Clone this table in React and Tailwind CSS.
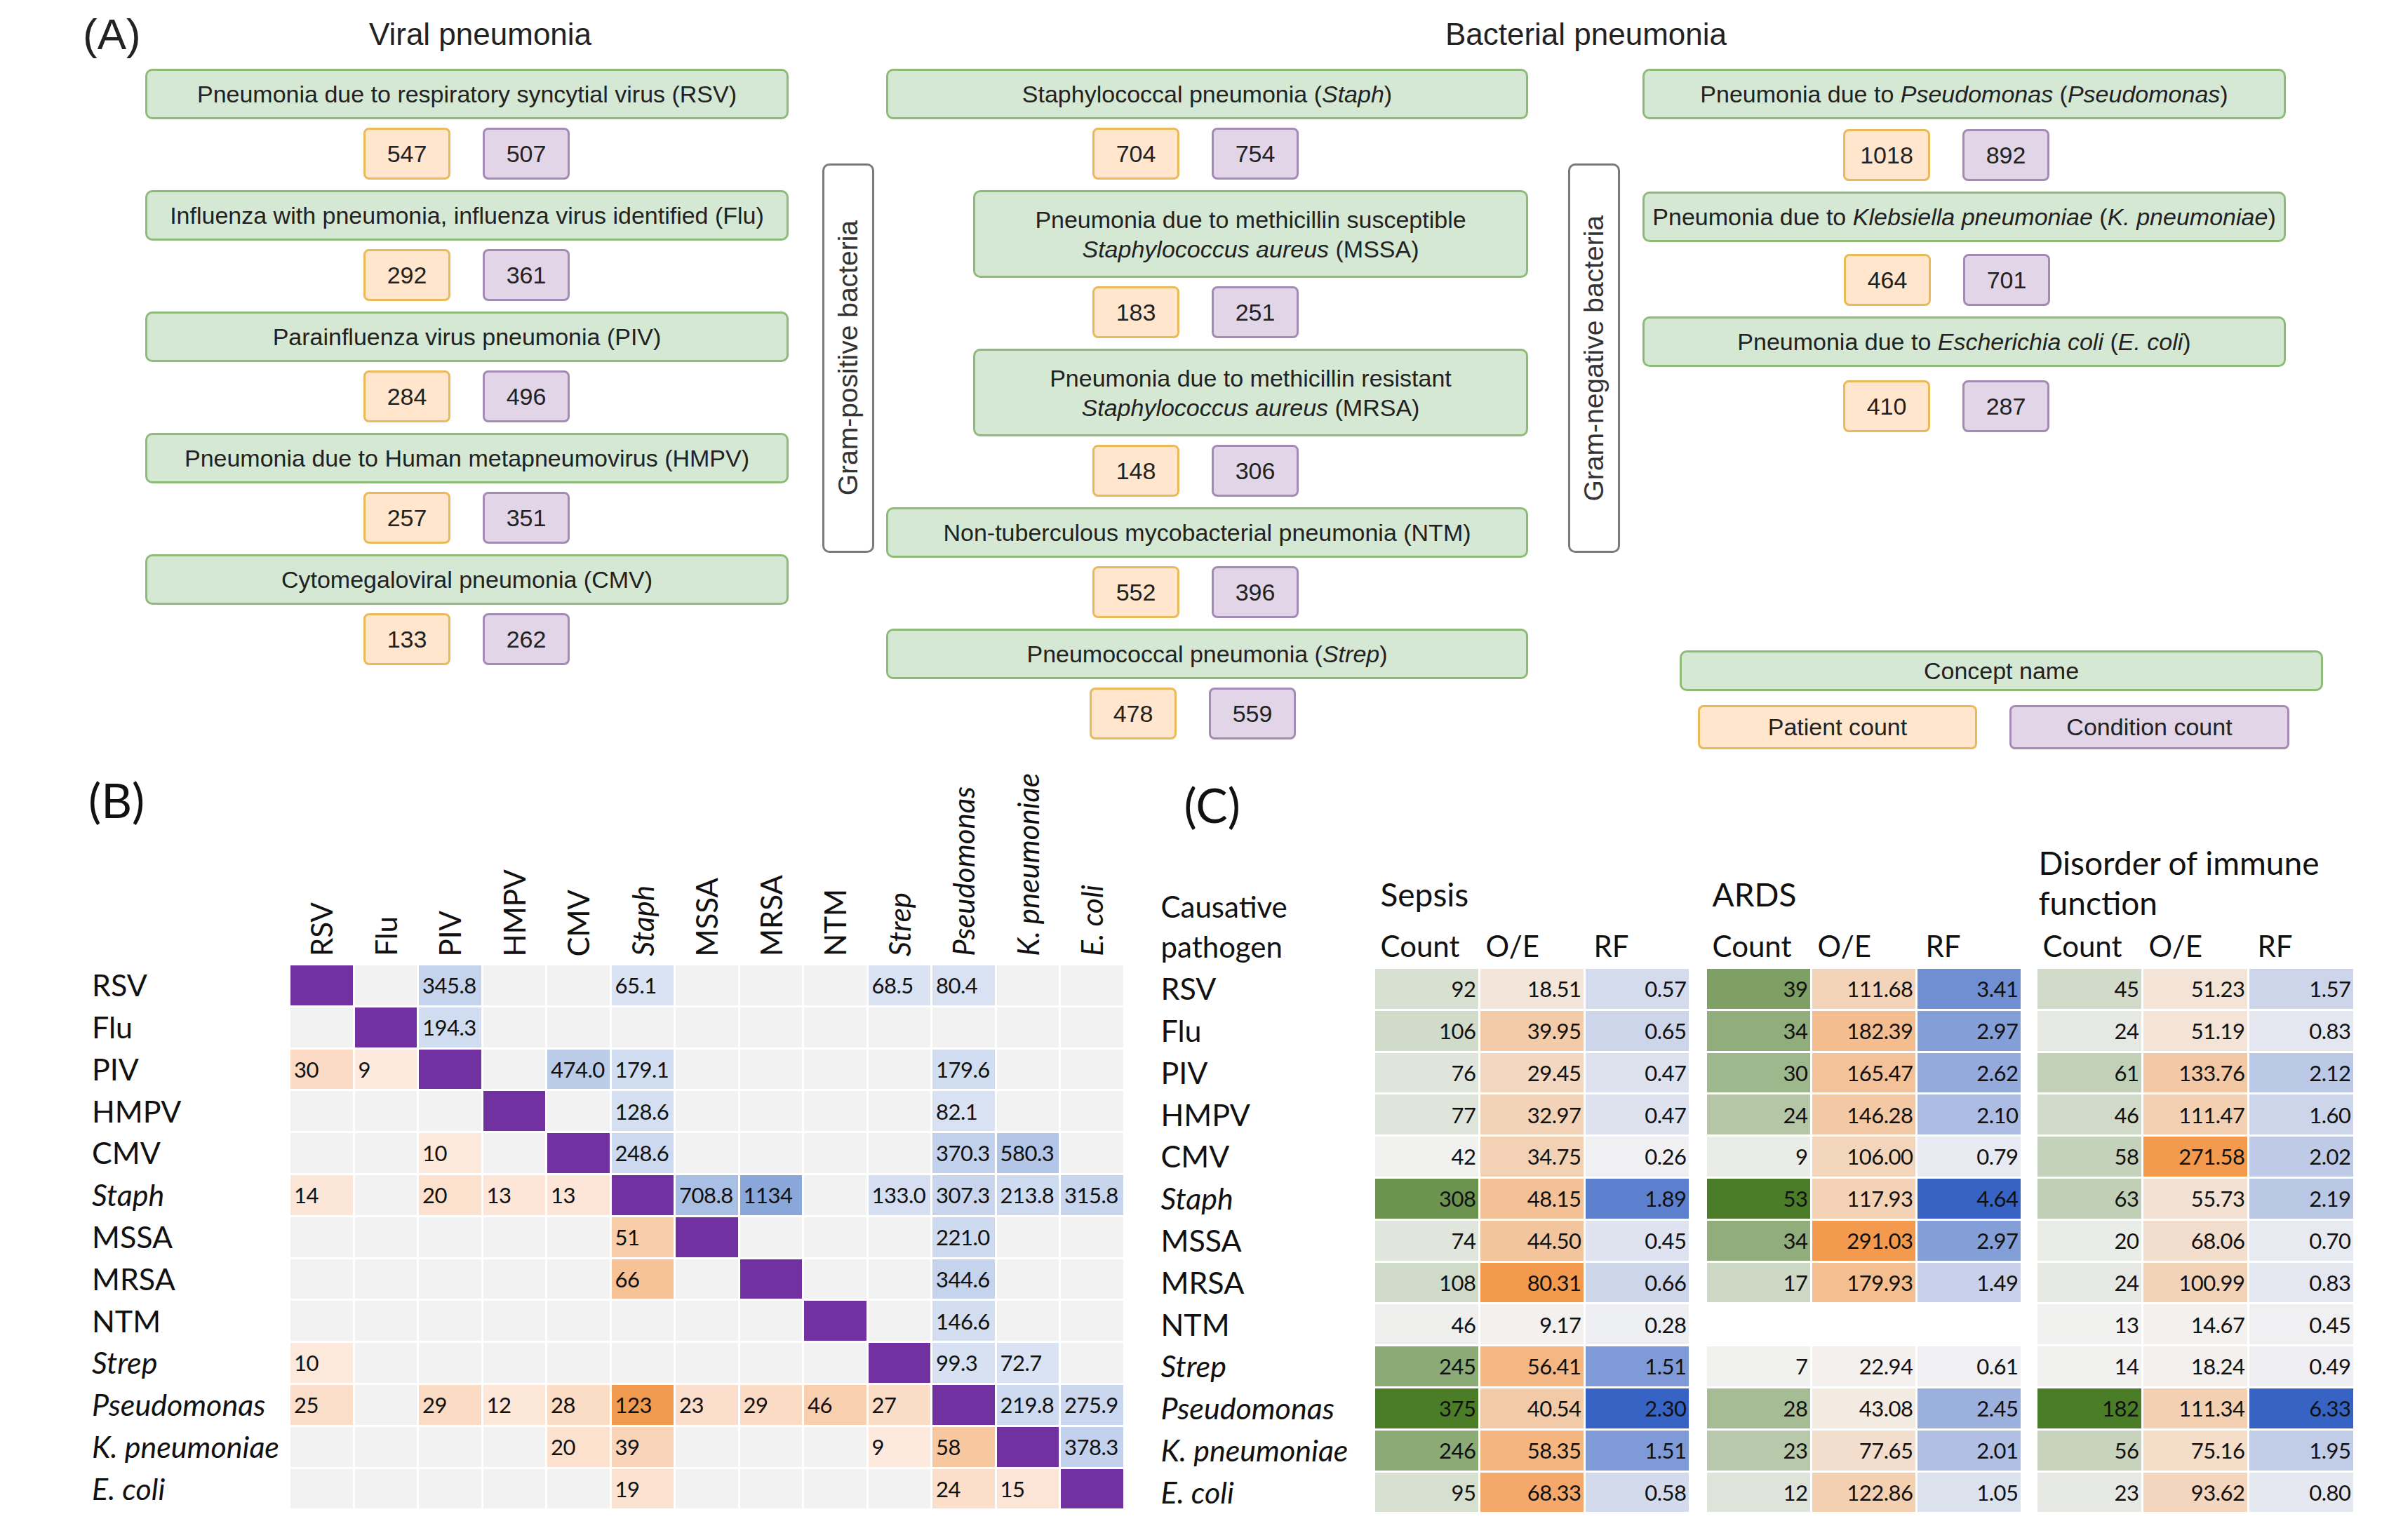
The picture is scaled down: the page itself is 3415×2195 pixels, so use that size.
import React from "react";

const SANS = "font-['Liberation_Sans',Arial,sans-serif]";
const CAL = "font-['Lato',sans-serif]";

function hex(h) {
  return [1, 3, 5].map((i) => parseInt(h.slice(i, i + 2), 16));
}
function mix(a, b, t) {
  const A = hex(a);
  const B = hex(b);
  const k = Math.max(0, Math.min(1, t));
  return `rgb(${A.map((v, i) => Math.round(v + (B[i] - v) * k)).join(",")})`;
}

function Green({ children, className = "" }) {
  return (
    <div
      className={`flex items-center justify-center text-center whitespace-nowrap rounded-[10px] border-[3px] border-[#8fbb78] bg-[#d5e8d4] text-[34px] leading-[42px] text-[#222] ${className}`}
    >
      <div>{children}</div>
    </div>
  );
}

function Counts({ a, b, className = "" }) {
  return (
    <div className={`flex gap-[46px] ${className}`}>
      <div className="flex h-[74px] w-[124px] items-center justify-center rounded-[8px] border-[3px] border-[#e9b95a] bg-[#ffe6cc] text-[34px] text-[#222]">
        {a}
      </div>
      <div className="flex h-[74px] w-[124px] items-center justify-center rounded-[8px] border-[3px] border-[#a48bb3] bg-[#e1d5e7] text-[34px] text-[#222]">
        {b}
      </div>
    </div>
  );
}

function GramBox({ label }) {
  return (
    <div className="mt-[135px] flex h-[555px] w-[74px] shrink-0 items-center justify-center rounded-[10px] border-[3px] border-[#7a7a7a] bg-white">
      <span className="[writing-mode:vertical-rl] rotate-180 whitespace-nowrap text-[39px] text-[#333]">
        {label}
      </span>
    </div>
  );
}

const PATH = [
  { n: "RSV" },
  { n: "Flu" },
  { n: "PIV" },
  { n: "HMPV" },
  { n: "CMV" },
  { n: "Staph", i: true },
  { n: "MSSA" },
  { n: "MRSA" },
  { n: "NTM" },
  { n: "Strep", i: true },
  { n: "Pseudomonas", i: true },
  { n: "K. pneumoniae", i: true },
  { n: "E. coli", i: true },
];

const BDATA = [
  { 2: "345.8", 5: "65.1", 9: "68.5", 10: "80.4" },
  { 2: "194.3" },
  { 0: "30", 1: "9", 4: "474.0", 5: "179.1", 10: "179.6" },
  { 5: "128.6", 10: "82.1" },
  { 2: "10", 5: "248.6", 10: "370.3", 11: "580.3" },
  { 0: "14", 2: "20", 3: "13", 4: "13", 6: "708.8", 7: "1134", 9: "133.0", 10: "307.3", 11: "213.8", 12: "315.8" },
  { 5: "51", 10: "221.0" },
  { 5: "66", 10: "344.6" },
  { 10: "146.6" },
  { 0: "10", 10: "99.3", 11: "72.7" },
  { 0: "25", 2: "29", 3: "12", 4: "28", 5: "123", 6: "23", 7: "29", 8: "46", 9: "27", 11: "219.8", 12: "275.9" },
  { 4: "20", 5: "39", 9: "9", 10: "58", 12: "378.3" },
  { 5: "19", 10: "24", 11: "15" },
];

function bColor(r, c, v) {
  if (r === c) return "#7231a0";
  if (v === undefined) return "#f2f2f2";
  const x = parseFloat(v);
  if (c > r) return mix("#dae3f3", "#8aa7da", (x - 65) / (1134 - 65));
  return mix("#fde9dd", "#f09b4f", (x - 9) / (123 - 9));
}

// C data: [count, oe, rf] for sepsis, ards, disorder
const CDATA = [
  [[92, "18.51", "0.57"], [39, "111.68", "3.41"], [45, "51.23", "1.57"]],
  [[106, "39.95", "0.65"], [34, "182.39", "2.97"], [24, "51.19", "0.83"]],
  [[76, "29.45", "0.47"], [30, "165.47", "2.62"], [61, "133.76", "2.12"]],
  [[77, "32.97", "0.47"], [24, "146.28", "2.10"], [46, "111.47", "1.60"]],
  [[42, "34.75", "0.26"], [9, "106.00", "0.79"], [58, "271.58", "2.02"]],
  [[308, "48.15", "1.89"], [53, "117.93", "4.64"], [63, "55.73", "2.19"]],
  [[74, "44.50", "0.45"], [34, "291.03", "2.97"], [20, "68.06", "0.70"]],
  [[108, "80.31", "0.66"], [17, "179.93", "1.49"], [24, "100.99", "0.83"]],
  [[46, "9.17", "0.28"], null, [13, "14.67", "0.45"]],
  [[245, "56.41", "1.51"], [7, "22.94", "0.61"], [14, "18.24", "0.49"]],
  [[375, "40.54", "2.30"], [28, "43.08", "2.45"], [182, "111.34", "6.33"]],
  [[246, "58.35", "1.51"], [23, "77.65", "2.01"], [56, "75.16", "1.95"]],
  [[95, "68.33", "0.58"], [12, "122.86", "1.05"], [23, "93.62", "0.80"]],
];

const RANGES = [
  [[42, 375], [9.17, 80.31], [0.26, 2.3]],
  [[7, 53], [22.94, 291.03], [0.61, 4.64]],
  [[13, 182], [14.67, 271.58], [0.45, 6.33]],
];
const ENDS = [
  ["#f1f1f0", "#4b7d28"],
  ["#f3f0ee", "#f49a4e"],
  ["#f0f0f3", "#3764c4"],
];

function cColor(g, k, v) {
  const [lo, hi] = RANGES[g][k];
  const x = parseFloat(v);
  return mix(ENDS[k][0], ENDS[k][1], (x - lo) / (hi - lo));
}

function PanelA() {
  return (
    <div className={`h-[1100px] ${SANS} text-[#222]`}>
      <div className="flex h-[98px] items-center">
        <div className="w-[207px] shrink-0 pl-[118px] text-[62px] leading-none">(A)</div>
        <div className="w-[917px] shrink-0 pl-[38px] text-center text-[44px]">Viral pneumonia</div>
        <div className="w-[139px] shrink-0" />
        <div className="w-[1995px] shrink-0 text-center text-[44px]">Bacterial pneumonia</div>
      </div>
      <div className="flex items-start">
        <div className="w-[207px] shrink-0" />
        {/* Viral column */}
        <div className="flex w-[917px] shrink-0 flex-col gap-[15px]">
          {[
            ["Pneumonia due to respiratory syncytial virus (RSV)", "547", "507"],
            ["Influenza with pneumonia, influenza virus identified (Flu)", "292", "361"],
            ["Parainfluenza virus pneumonia (PIV)", "284", "496"],
            ["Pneumonia due to Human metapneumovirus (HMPV)", "257", "351"],
            ["Cytomegaloviral pneumonia (CMV)", "133", "262"],
          ].map(([t, a, b]) => (
            <div key={t} className="flex flex-col">
              <Green className="h-[72px]">{t}</Green>
              <Counts a={a} b={b} className="mt-[12px] pl-[311px]" />
            </div>
          ))}
        </div>
        <div className="w-[48px] shrink-0" />
        <GramBox label="Gram-positive bacteria" />
        <div className="w-[17px] shrink-0" />
        {/* Gram-positive column */}
        <div className="flex w-[915px] shrink-0 flex-col gap-[15px]">
          <div className="flex flex-col">
            <Green className="h-[72px]">
              Staphylococcal pneumonia (<i>Staph</i>)
            </Green>
            <Counts a="704" b="754" className="mt-[12px] pl-[294px]" />
          </div>
          <div className="flex flex-col">
            <Green className="ml-[124px] h-[125px]">
              Pneumonia due to methicillin susceptible
              <br />
              <i>Staphylococcus aureus</i> (MSSA)
            </Green>
            <Counts a="183" b="251" className="mt-[12px] pl-[294px]" />
          </div>
          <div className="flex flex-col">
            <Green className="ml-[124px] h-[125px]">
              Pneumonia due to methicillin resistant
              <br />
              <i>Staphylococcus aureus</i> (MRSA)
            </Green>
            <Counts a="148" b="306" className="mt-[12px] pl-[294px]" />
          </div>
          <div className="flex flex-col">
            <Green className="h-[72px]">Non-tuberculous mycobacterial pneumonia (NTM)</Green>
            <Counts a="552" b="396" className="mt-[12px] pl-[294px]" />
          </div>
          <div className="flex flex-col">
            <Green className="h-[72px]">
              Pneumococcal pneumonia (<i>Strep</i>)
            </Green>
            <Counts a="478" b="559" className="mt-[12px] pl-[290px]" />
          </div>
        </div>
        <div className="w-[57px] shrink-0" />
        <GramBox label="Gram-negative bacteria" />
        <div className="w-[32px] shrink-0" />
        {/* Gram-negative column */}
        <div className="flex w-[917px] shrink-0 flex-col">
          <div className="flex flex-col gap-[15px]">
            <div className="flex flex-col">
              <Green className="h-[72px]">
                Pneumonia due to <i>Pseudomonas</i> (<i>Pseudomonas</i>)
              </Green>
              <Counts a="1018" b="892" className="mt-[14px] pl-[286px]" />
            </div>
            <div className="flex flex-col">
              <Green className="h-[72px]">
                Pneumonia due to <i>Klebsiella pneumoniae</i> (<i>K. pneumoniae</i>)
              </Green>
              <Counts a="464" b="701" className="mt-[17px] pl-[287px]" />
            </div>
            <div className="flex flex-col">
              <Green className="h-[72px]">
                Pneumonia due to <i>Escherichia coli</i> (<i>E. coli</i>)
              </Green>
              <Counts a="410" b="287" className="mt-[19px] pl-[286px]" />
            </div>
          </div>
          <div className="ml-[53px] mt-[311px] flex w-[917px] flex-col">
            <Green className="h-[58px]">Concept name</Green>
            <div className="mt-[20px] flex gap-[46px] pl-[26px]">
              <div className="flex h-[63px] w-[398px] items-center justify-center rounded-[8px] border-[3px] border-[#e9b95a] bg-[#ffe6cc] text-[34px]">
                Patient count
              </div>
              <div className="flex h-[63px] w-[399px] items-center justify-center rounded-[8px] border-[3px] border-[#a48bb3] bg-[#e1d5e7] text-[34px]">
                Condition count
              </div>
            </div>
          </div>
        </div>
      </div>
    </div>
  );
}

function PanelB() {
  return (
    <div className={`shrink-0 pl-[131px] ${CAL} text-[#111]`}>
      <div className="grid grid-cols-[280px_repeat(13,88.5px)] grid-rows-[273px_repeat(13,56.8px)] gap-[3px]">
        <div className="-ml-[5px] pt-[6px] text-[68px] leading-none">(B)</div>
        {PATH.map((p) => (
          <div key={"h" + p.n} className="flex items-end justify-center pb-[10px]">
            <span
              className={`[writing-mode:vertical-rl] rotate-180 whitespace-nowrap text-[42px] leading-none ${p.i ? "italic" : ""}`}
            >
              {p.n}
            </span>
          </div>
        ))}
        {PATH.map((p, r) => (
          <React.Fragment key={"r" + p.n}>
            <div className={`flex items-center text-[43px] ${p.i ? "italic" : ""}`}>{p.n}</div>
            {PATH.map((q, c) => {
              const v = BDATA[r][c];
              return (
                <div
                  key={c}
                  className="flex items-center pl-[5px] text-[31px] tracking-[-0.5px]"
                  style={{ backgroundColor: bColor(r, c, v) }}
                >
                  {r === c ? "" : v}
                </div>
              );
            })}
          </React.Fragment>
        ))}
      </div>
    </div>
  );
}

function PanelC() {
  return (
    <div className={`ml-[54px] shrink-0 ${CAL} text-[#111]`}>
      <div className="h-[79px] pl-[33px] pt-[13px] text-[68px] leading-none">(C)</div>
      <div className="grid grid-cols-[302px_repeat(3,147px)_20px_repeat(3,147px)_18px_repeat(3,148px)] grid-rows-[136px_60px_repeat(13,56.8px)] gap-[3px]">
        <div className="row-span-2 self-end text-[42px] leading-[57px]">
          Causative
          <br />
          pathogen
        </div>
        <div className="col-span-3 self-end pb-[12px] pl-[8px] text-[46px] leading-[57px]">Sepsis</div>
        <div />
        <div className="col-span-3 self-end pb-[12px] pl-[8px] text-[46px] leading-[57px]">ARDS</div>
        <div />
        <div className="col-span-3 self-end pl-[2px] text-[46px] leading-[57px]">Disorder of immune function</div>
        {[0, 1, 2].map((g) => (
          <React.Fragment key={"sub" + g}>
            <div className="flex items-center pl-[8px] text-[42px]">Count</div>
            <div className="flex items-center pl-[8px] text-[42px]">O/E</div>
            <div className="flex items-center pl-[12px] text-[42px]">RF</div>
            {g < 2 ? <div /> : null}
          </React.Fragment>
        ))}
        {PATH.map((p, r) => (
          <React.Fragment key={"cr" + p.n}>
            <div className={`flex items-center text-[43px] ${p.i ? "italic" : ""}`}>{p.n}</div>
            {[0, 1, 2].map((g) => {
              const d = CDATA[r][g];
              return (
                <React.Fragment key={g}>
                  {[0, 1, 2].map((k) => (
                    <div
                      key={k}
                      className="flex items-center justify-end pr-[3px] text-[31px] tracking-[-0.5px]"
                      style={{ backgroundColor: d ? cColor(g, k, d[k]) : "transparent" }}
                    >
                      {d ? d[k] : ""}
                    </div>
                  ))}
                  {g < 2 ? <div /> : null}
                </React.Fragment>
              );
            })}
          </React.Fragment>
        ))}
      </div>
    </div>
  );
}

export default function App() {
  return (
    <div className="h-[2195px] w-[3415px] overflow-hidden bg-white">
      <PanelA />
      <div className="flex items-start">
        <PanelB />
        <PanelC />
      </div>
    </div>
  );
}
